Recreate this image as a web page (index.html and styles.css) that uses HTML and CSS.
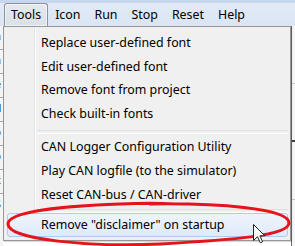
FILE: index.html
```html
<!DOCTYPE html>
<html lang="en">
<head>
    <meta charset="UTF-8">
    <title>Tools menu</title>
    <link rel="stylesheet" href="styles.css">
</head>
<body>
    <div class="screen">
        <div class="menubar">
            <div class="top-item open">Tools</div>
            <div class="top-item">Icon</div>
            <div class="top-item">Run</div>
            <div class="top-item">Stop</div>
            <div class="top-item">Reset</div>
            <div class="top-item">Help</div>
        </div>

        <div class="workspace">
            <div class="left-pane">
                <div class="cell">n</div>
                <div class="cell">n</div>
                <div class="cell">e</div>
                <div class="cell">H</div>
                <div class="cell">o</div>
                <div class="cell">o</div>
                <div class="cell">x</div>
                <div class="cell last">S</div>
            </div>
            <div class="middle-pane"></div>
            <div class="right-pane">
                <div class="rcell"></div>
                <div class="rcell dark"></div>
                <div class="rcell"></div>
                <div class="rcell dark"></div>
            </div>
        </div>

        <div class="menu">
            <div class="menu-item">Replace user-defined font</div>
            <div class="menu-item">Edit user-defined font</div>
            <div class="menu-item">Remove font from project</div>
            <div class="menu-item">Check built-in fonts</div>
            <div class="sep"></div>
            <div class="menu-item">CAN Logger Configuration Utility</div>
            <div class="menu-item">Play CAN logfile (to the simulator)</div>
            <div class="menu-item">Reset CAN-bus / CAN-driver</div>
            <div class="sep tight"></div>
            <div class="menu-item hover">Remove "disclaimer" on startup</div>
        </div>

        <!-- hand drawn marker round the last entry -->
        <svg class="marker" width="295" height="246" viewBox="0 0 295 246">
            <path d="M150,204 C215,203 289,208 289,223 C289,236 230,240 160,244 C90,247 8,240 8,224 C8,212 60,206 120,204 C140,203 160,203 175,204"
                  fill="none" stroke="#e5141c" stroke-width="3" stroke-linecap="round"/>
        </svg>

        <svg class="cursor" width="13" height="20" viewBox="0 0 13 20">
            <path d="M0.5,0.5 L0.5,16.5 L4.5,12.7 L7.3,18.8 L9.6,17.8 L6.9,11.8 L11.8,11.8 Z"
                  fill="#fff" stroke="#222" stroke-width="1" stroke-linejoin="round"/>
        </svg>
    </div>
</body>
</html>
```

FILE: styles.css
```css
* {
    box-sizing: border-box;
}

body {
    margin: 0;
    font-family: "Noto Sans", sans-serif;
    font-size: 12.4px;
    color: #000;
}

.screen {
    position: relative;
    width: 295px;
    height: 246px;
    overflow: hidden;
    background: #fff;
}

.menubar {
    height: 26px;
    display: flex;
    align-items: flex-end;
    padding-left: 4px;
    background: linear-gradient(#c6d7ee 0, #c6d7ee 3px, #e2eaf6 3px, #dbe5f3 100%);
}

.top-item {
    height: 23px;
    line-height: 21px;
    padding: 0 6px;
    border: 1px solid transparent;
    border-bottom: none;
}

.top-item.open {
    border-color: #8d9196;
    border-radius: 3px 3px 0 0;
    background: linear-gradient(#e4e9ef, #d9e0e8);
    box-shadow: inset 0 0 0 1px rgba(255, 255, 255, 0.6);
}

.workspace {
    display: flex;
    height: 220px;
}

.left-pane {
    width: 3px;
    background: #f4f4f4;
    overflow: hidden;
}

.left-pane .cell {
    height: 24px;
    line-height: 22px;
    border-bottom: 1px solid #a5a5a5;
    font-family: "DejaVu Sans Mono", monospace;
    font-size: 10px;
    text-indent: -5px;
}

.left-pane .cell.last {
    border-bottom: none;
}

.middle-pane {
    flex: 1;
    background: #fff;
}

.right-pane {
    width: 4px;
    border-left: 1px solid #6d6d6d;
    background: #f6f6f6;
}

.rcell {
    height: 58px;
    border-bottom: 1px solid #c8c8c8;
}

.rcell.dark {
    border-bottom: 2px solid #404040;
}

.menu {
    position: absolute;
    left: 3px;
    top: 26px;
    width: 288px;
    height: 215px;
    padding: 3px 2px 0 3px;
    border: 1px solid #979797;
    background: linear-gradient(to right, #f0f0f0 30px, #e2e3e3 30px, #e2e3e3 31px, #fff 31px, #fff 32px, #f0f0f0 32px);
    box-shadow: 1px 1px 1px rgba(0, 0, 0, 0.15);
}

.menu-item {
    height: 23.6px;
    line-height: 23.6px;
    padding-left: 33px;
    white-space: nowrap;
    border: 1px solid transparent;
    border-radius: 3px;
}

.menu-item.hover {
    height: 24px;
    line-height: 22px;
    border-color: #abcdf1;
    background: linear-gradient(#eef4fc, #dfeaf8);
}

.sep {
    height: 10px;
    padding-top: 6px;
    margin-left: 30px;
}

.sep::after {
    content: "";
    display: block;
    height: 2px;
    border-top: 1px solid #e0e0e0;
    border-bottom: 1px solid #fff;
}

.sep.tight {
    height: 8px;
    padding-top: 4px;
}

.marker {
    position: absolute;
    left: 0;
    top: 0;
}

.cursor {
    position: absolute;
    left: 253px;
    top: 224px;
}
```
